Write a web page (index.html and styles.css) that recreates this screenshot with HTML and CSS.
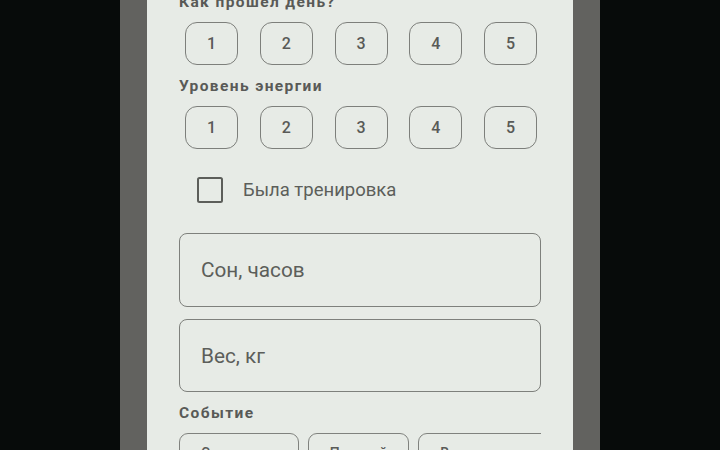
FILE: index.html
```html
<!DOCTYPE html>
<html lang="ru">
<head>
<meta charset="utf-8">
<title>Дневник</title>
<link rel="stylesheet" href="styles.css">
</head>
<body>
<div class="frame">
  <div class="sheet">
    <div class="content">
      <div class="title first">Как прошел день?</div>
      <div class="rating">
        <div class="rate">1</div><div class="rate">2</div><div class="rate">3</div><div class="rate">4</div><div class="rate">5</div>
      </div>
      <div class="title">Уровень энергии</div>
      <div class="rating">
        <div class="rate">1</div><div class="rate">2</div><div class="rate">3</div><div class="rate">4</div><div class="rate">5</div>
      </div>
      <div class="check-row">
        <div class="checkbox"></div>
        <div class="check-label">Была тренировка</div>
      </div>
      <div class="field first-field">Сон, часов</div>
      <div class="field second-field">Вес, кг</div>
      <div class="title">Событие</div>
      <div class="chips">
        <div class="chip">Совещание</div>
        <div class="chip">Поздний</div>
        <div class="chip">Вечеринка с друзьями</div>
      </div>
    </div>
  </div>
</div>
</body>
</html>
```
FILE: styles.css
```css
html, body {
  margin: 0;
  padding: 0;
}
body {
  background: #070b0a;
  height: 450px;
  overflow: hidden;
  font-family: Roboto, "Noto Sans", sans-serif;
}
.frame {
  width: 480px;
  height: 450px;
  margin: 0 auto;
  padding: 0 27px;
  box-sizing: border-box;
  background: #62625f;
}
.sheet {
  height: 100%;
  background: #e7ebe6;
  overflow: hidden;
  padding: 0 32px;
}
.content {
  margin-top: -8px;
}
.title {
  font-size: 15.5px;
  line-height: 20px;
  font-weight: 700;
  letter-spacing: 1.4px;
  color: #595a57;
  margin-top: 11px;
}
.title.first {
  margin-top: 0;
}
.rating {
  display: flex;
  gap: 21.75px;
  padding-left: 6px;
  margin-top: 10px;
}
.rate {
  width: 53px;
  height: 43px;
  box-sizing: border-box;
  border: 1.6px solid #7d7f7b;
  border-radius: 12px;
  display: flex;
  align-items: center;
  justify-content: center;
  font-size: 16px;
  font-weight: 500;
  color: #595a57;
}
.check-row {
  height: 48px;
  margin-top: 17px;
  padding-left: 18px;
  display: flex;
  align-items: center;
}
.checkbox {
  width: 26px;
  height: 26px;
  box-sizing: border-box;
  border: 2.5px solid #5c5e5a;
  border-radius: 2.5px;
}
.check-label {
  margin-left: 20px;
  font-size: 18.5px;
  color: #5c5e5a;
}
.field {
  height: 74px;
  box-sizing: border-box;
  border: 1.5px solid #7e807c;
  border-radius: 8px;
  padding-left: 21px;
  display: flex;
  align-items: center;
  font-size: 20.75px;
  color: #5c5e5a;
}
.first-field {
  margin-top: 19px;
}
.second-field {
  margin-top: 12px;
  height: 73px;
}
.chips {
  display: flex;
  gap: 9px;
  margin-top: 10px;
  overflow: hidden;
}
.chip {
  flex: none;
  height: 40px;
  box-sizing: border-box;
  border: 1.5px solid #80827e;
  border-radius: 9px;
  padding: 0 21px;
  display: flex;
  align-items: center;
  font-size: 14px;
  font-weight: 500;
  color: #5a5b58;
  white-space: nowrap;
}
```
